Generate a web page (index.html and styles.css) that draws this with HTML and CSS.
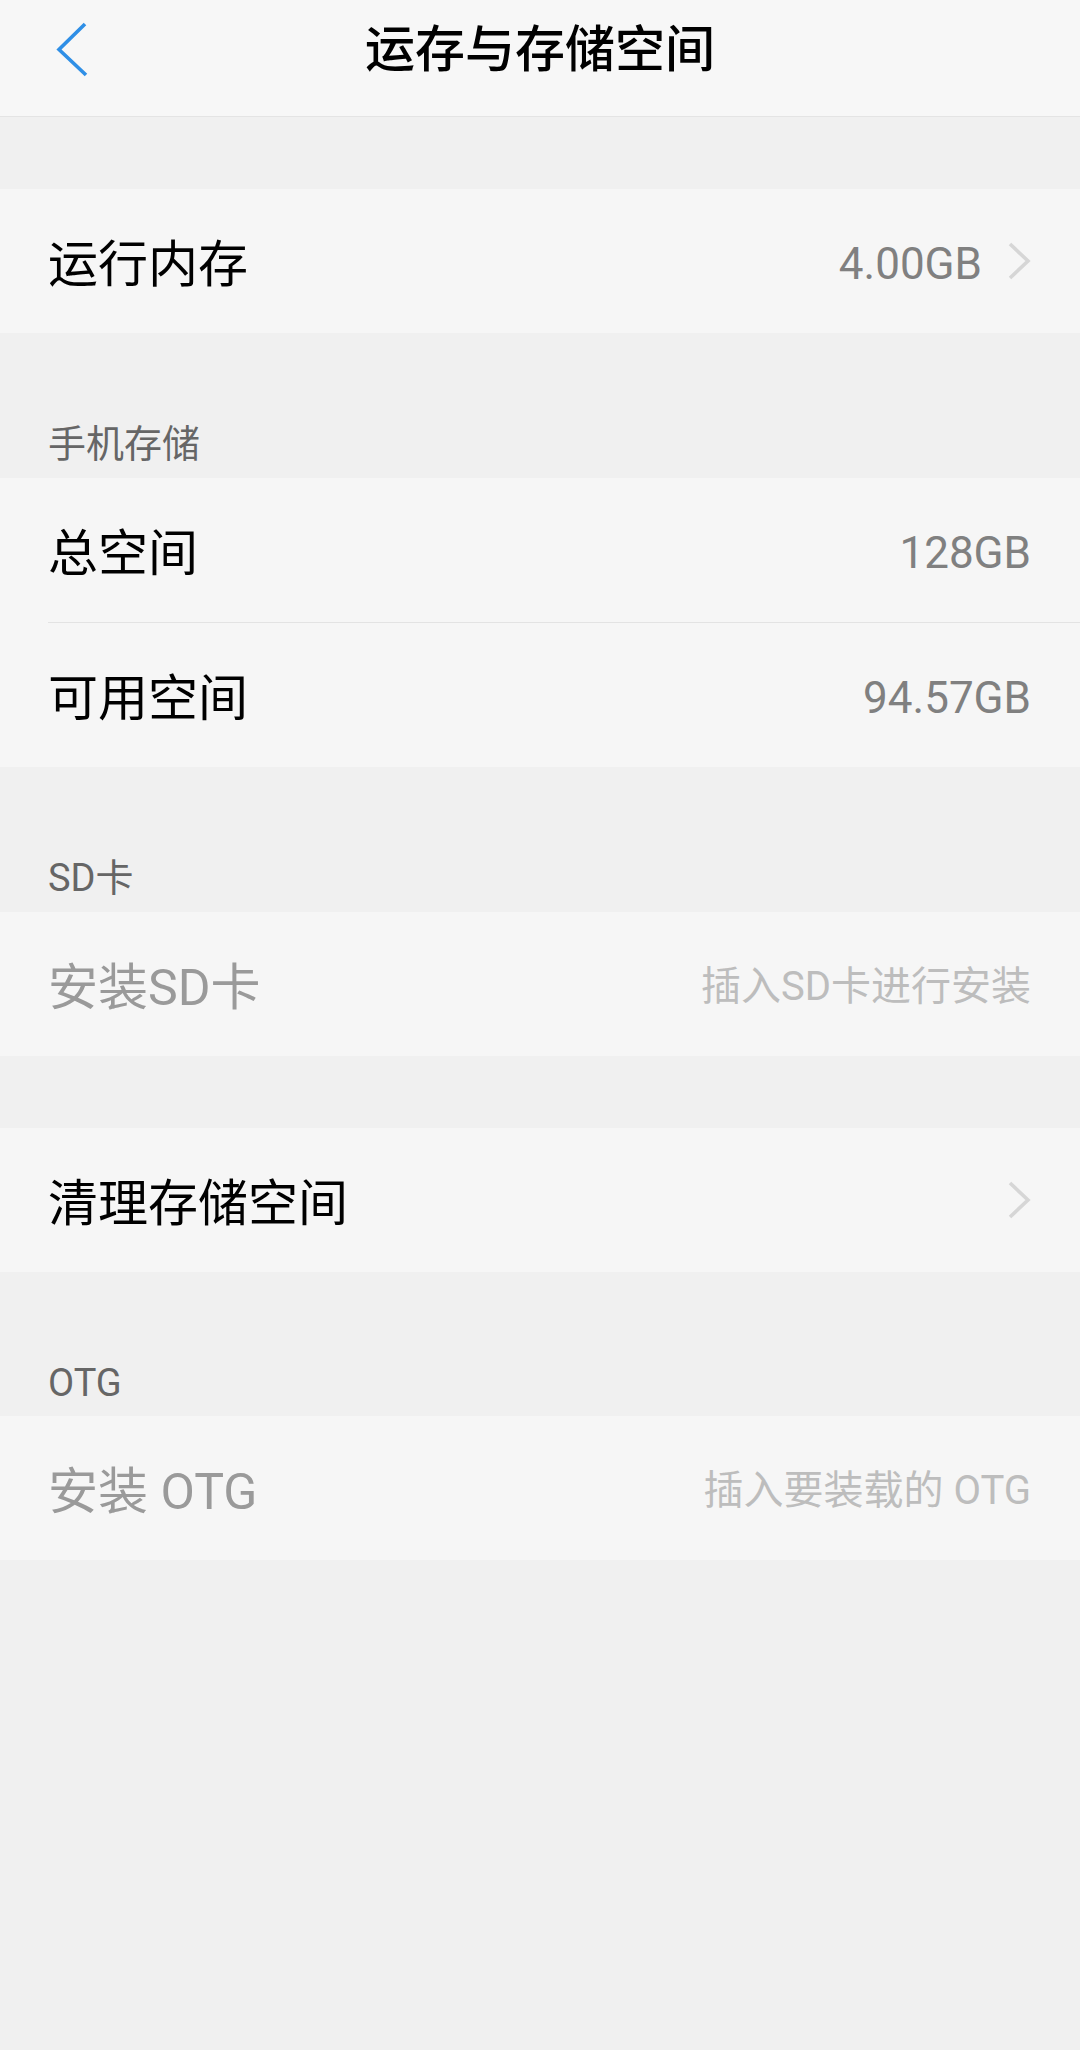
FILE: index.html
```html
<!DOCTYPE html>
<html lang="zh-CN">
<head>
    <meta charset="UTF-8">
    <meta name="viewport" content="width=device-width, initial-scale=1.0">
    <title>运存与存储空间</title>
    <link rel="stylesheet" href="styles.css">
</head>
<body>
    <div class="header">
        <div class="header-left">
            <svg class="back" width="45" height="64" viewBox="0 0 45 64">
                <polyline points="35,6 9,31.5 36,57" fill="none" stroke="#2f8fe6" stroke-width="3.6" stroke-linecap="butt" stroke-linejoin="miter"/>
            </svg>
        </div>
        <h1>运存与存储空间</h1>
        <div></div>
    </div>

    <div class="gap"></div>
    <div class="group">
        <div class="row">
            <span class="title">运行内存</span>
            <span class="value">4.00GB</span>
            <svg class="chevron" width="24" height="38" viewBox="0 0 24 38">
                <polyline points="3,2 21,19 3,36" fill="none" stroke="#d6d6d6" stroke-width="3.6"/>
            </svg>
        </div>
    </div>

    <div class="section-label">手机存储</div>
    <div class="group">
        <div class="row">
            <span class="title">总空间</span>
            <span class="value">128GB</span>
        </div>
        <div class="divider"></div>
        <div class="row">
            <span class="title">可用空间</span>
            <span class="value">94.57GB</span>
        </div>
    </div>

    <div class="section-label">SD卡</div>
    <div class="group">
        <div class="row disabled">
            <span class="title">安装SD卡</span>
            <span class="hint">插入SD卡进行安装</span>
        </div>
    </div>

    <div class="gap"></div>
    <div class="group">
        <div class="row">
            <span class="title">清理存储空间</span>
            <svg class="chevron" width="24" height="38" viewBox="0 0 24 38">
                <polyline points="3,2 21,19 3,36" fill="none" stroke="#d6d6d6" stroke-width="3.6"/>
            </svg>
        </div>
    </div>

    <div class="section-label last">OTG</div>
    <div class="group">
        <div class="row disabled">
            <span class="title">安装 OTG</span>
            <span class="hint">插入要装载的 OTG</span>
        </div>
    </div>
</body>
</html>
```

FILE: styles.css
```css
body {
    margin: 0;
    padding: 0;
    background-color: #f0f0f0;
    font-family: Roboto, "Noto Sans CJK SC", sans-serif;
    color: #000;
}
.header {
    display: grid;
    grid-template-columns: 1fr auto 1fr;
    align-items: center;
    height: 117px;
    padding-bottom: 17px;
    box-sizing: border-box;
    background-color: #f7f7f7;
    border-bottom: 1px solid #e4e4e4;
}
.header-left {
    display: flex;
    align-items: center;
    padding-left: 50px;
}
.back {
    display: block;
}
.header h1 {
    margin: 0;
    font-size: 50px;
    font-weight: 500;
    line-height: 1;
    color: #000;
}
.gap {
    height: 72px;
}
.group {
    background-color: #f6f6f6;
}
.row {
    display: flex;
    align-items: center;
    height: 144px;
    padding: 0 49px 0 48px;
}
.title {
    flex: 1;
    padding-top: 7px;
    font-size: 50px;
    line-height: 1;
    color: #000;
}
.value {
    padding-top: 6px;
    font-size: 44px;
    line-height: 1;
    color: #808080;
}
.chevron {
    display: block;
    margin-left: 25px;
}
.divider {
    height: 1px;
    margin-left: 48px;
    background-color: #e3e3e3;
}
.disabled .title {
    color: #9a9a9a;
}
.hint {
    padding-top: 6px;
    font-size: 40px;
    line-height: 1;
    color: #bdbdbd;
}
.section-label {
    height: 145px;
    padding: 92px 0 0 48px;
    box-sizing: border-box;
    font-size: 38px;
    line-height: 38px;
    color: #666;
}
.section-label.last {
    height: 144px;
}
```
